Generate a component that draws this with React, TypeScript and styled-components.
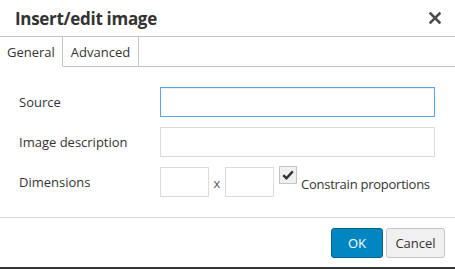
import styled, { createGlobalStyle } from "styled-components";

const Global = createGlobalStyle`
  html, body {
    margin: 0;
    padding: 0;
    background: #fff;
  }
  body {
    font-family: "Open Sans", "Noto Sans", sans-serif;
    color: #333;
  }
`;

const Dialog = styled.div`
  width: 455px;
  height: 269px;
  box-sizing: border-box;
  display: flex;
  flex-direction: column;
  background: #fff;
  border-bottom: 2px solid #333;
`;

const Head = styled.div`
  height: 37px;
  box-sizing: border-box;
  border-bottom: 1px solid #c5c5c5;
  display: flex;
  align-items: center;
  justify-content: space-between;
  padding: 0 13px 0 15px;
`;

const Title = styled.div`
  font-size: 17px;
  font-weight: 700;
  color: #333;
  letter-spacing: -0.3px;
`;

const Close = styled.button`
  border: none;
  background: none;
  padding: 0;
  width: 14px;
  height: 14px;
  display: flex;
  align-items: center;
  justify-content: center;
  cursor: pointer;
`;

const Tabs = styled.div`
  display: flex;
  height: 30px;
`;

const Tab = styled.div<{ active?: boolean }>`
  box-sizing: border-box;
  height: 30px;
  display: flex;
  align-items: center;
  padding: 0 ${({ active }) => (active ? "7px" : "8px")};
  font-size: 13px;
  color: #333;
  border-right: 1px solid #c5c5c5;
  border-bottom: 1px solid ${({ active }) => (active ? "transparent" : "#c5c5c5")};
`;

const TabFill = styled.div`
  flex: 1;
  border-bottom: 1px solid #c5c5c5;
`;

const Body = styled.div`
  padding: 20px 20px 0 19px;
  display: flex;
  flex-direction: column;
  gap: 10px;
  height: 151px;
  box-sizing: border-box;
  border-bottom: 1px solid #d9d9d9;
`;

const Row = styled.div`
  display: flex;
  align-items: center;
  height: 30px;
`;

const Label = styled.label`
  width: 141px;
  font-size: 13px;
  color: #333;
`;

const Input = styled.input<{ focused?: boolean; w?: number }>`
  box-sizing: border-box;
  height: 30px;
  width: ${({ w }) => (w ? `${w}px` : "275px")};
  border: 1px solid ${({ focused }) => (focused ? "#59a5e5" : "#dcdcdc")};
  box-shadow: ${({ focused }) =>
    focused ? "inset 0 1px 1px rgba(0,0,0,0.075)" : "none"};
  background: #fff;
  outline: none;
  padding: 0 4px;
  font-family: inherit;
`;

const Times = styled.span`
  width: 16px;
  text-align: center;
  font-size: 13px;
  color: #595959;
  padding-top: 2px;
`;

const CheckWrap = styled.label`
  display: flex;
  align-self: stretch;
  align-items: center;
  margin-left: 5px;
  font-size: 13px;
  color: #333;
  gap: 4px;
  white-space: nowrap;
`;

const CheckBox = styled.span`
  box-sizing: border-box;
  align-self: flex-start;
  margin-top: -1px;
  width: 18px;
  height: 18px;
  border: 1px solid #c5c5c5;
  background: #f0f0f0;
  display: flex;
  align-items: center;
  justify-content: center;
`;

const ConstrainText = styled.span`
  padding-top: 3px;
  letter-spacing: -0.25px;
`;

const Foot = styled.div`
  flex: 1;
  display: flex;
  justify-content: flex-end;
  align-items: center;
  gap: 3px;
  padding: 0 10px 0 0;
`;

const Button = styled.button<{ primary?: boolean }>`
  box-sizing: border-box;
  height: 30px;
  padding: 0 ${({ primary }) => (primary ? "15px" : "8px")};
  min-width: ${({ primary }) => (primary ? "52px" : "59px")};
  border-radius: 3px;
  font-family: inherit;
  font-size: 13px;
  border: 1px solid ${({ primary }) => (primary ? "#0b5f8d" : "#c5c5c5")};
  background: ${({ primary }) => (primary ? "#0086c0" : "#f0f0f0")};
  color: ${({ primary }) => (primary ? "#fff" : "#333")};
  cursor: pointer;
  margin-top: 1px;
`;

export default function App() {
  return (
    <>
      <Global />
      <Dialog>
        <Head>
          <Title>Insert/edit image</Title>
          <Close aria-label="Close">
            <svg width="12" height="12" viewBox="0 0 12 12">
              <path d="M1.5 1.5 L10.5 10.5 M10.5 1.5 L1.5 10.5" stroke="#4d4d4d" strokeWidth="2.6" strokeLinecap="square" />
            </svg>
          </Close>
        </Head>
        <Tabs>
          <Tab active>General</Tab>
          <Tab>Advanced</Tab>
          <TabFill />
        </Tabs>
        <Body>
          <Row>
            <Label>Source</Label>
            <Input focused />
          </Row>
          <Row>
            <Label>Image description</Label>
            <Input />
          </Row>
          <Row>
            <Label>Dimensions</Label>
            <Input w={49} />
            <Times>x</Times>
            <Input w={49} />
            <CheckWrap>
              <CheckBox>
                <svg width="12" height="10" viewBox="0 0 12 10">
                  <path d="M1.2 5.2 L4.4 8.2 L10.8 1.4" fill="none" stroke="#333" strokeWidth="2.4" />
                </svg>
              </CheckBox>
              <ConstrainText>Constrain proportions</ConstrainText>
            </CheckWrap>
          </Row>
        </Body>
        <Foot>
          <Button primary>OK</Button>
          <Button>Cancel</Button>
        </Foot>
      </Dialog>
    </>
  );
}
